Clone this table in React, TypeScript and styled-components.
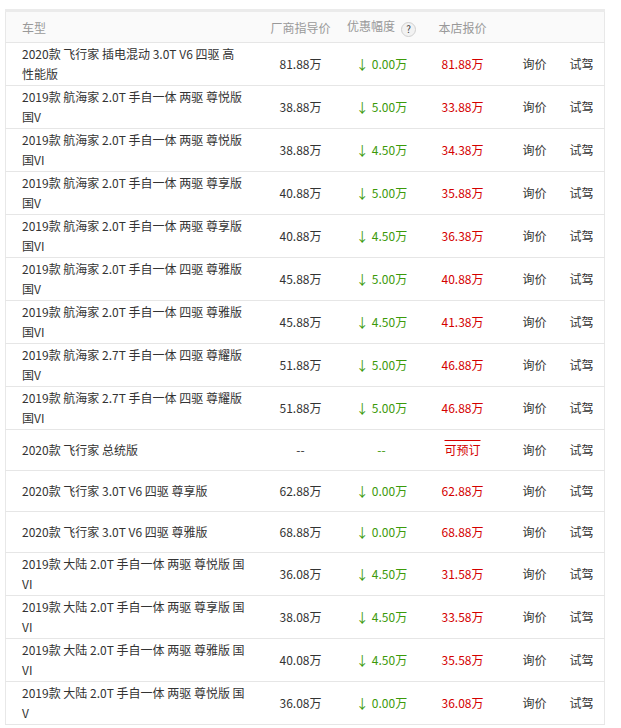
import React from "react";
import styled, { createGlobalStyle } from "styled-components";

type CarRow = {
  name: string[];
  guide: string;
  discount: string | null;
  price: string;
};

const rows: CarRow[] = [
  { name: ["2020款 飞行家 插电混动 3.0T V6 四驱 高", "性能版"], guide: "81.88万", discount: "0.00万", price: "81.88万" },
  { name: ["2019款 航海家 2.0T 手自一体 两驱 尊悦版", "国V"], guide: "38.88万", discount: "5.00万", price: "33.88万" },
  { name: ["2019款 航海家 2.0T 手自一体 两驱 尊悦版", "国VI"], guide: "38.88万", discount: "4.50万", price: "34.38万" },
  { name: ["2019款 航海家 2.0T 手自一体 两驱 尊享版", "国V"], guide: "40.88万", discount: "5.00万", price: "35.88万" },
  { name: ["2019款 航海家 2.0T 手自一体 两驱 尊享版", "国VI"], guide: "40.88万", discount: "4.50万", price: "36.38万" },
  { name: ["2019款 航海家 2.0T 手自一体 四驱 尊雅版", "国V"], guide: "45.88万", discount: "5.00万", price: "40.88万" },
  { name: ["2019款 航海家 2.0T 手自一体 四驱 尊雅版", "国VI"], guide: "45.88万", discount: "4.50万", price: "41.38万" },
  { name: ["2019款 航海家 2.7T 手自一体 四驱 尊耀版", "国V"], guide: "51.88万", discount: "5.00万", price: "46.88万" },
  { name: ["2019款 航海家 2.7T 手自一体 四驱 尊耀版", "国VI"], guide: "51.88万", discount: "5.00万", price: "46.88万" },
  { name: ["2020款 飞行家 总统版"], guide: "--", discount: null, price: "可预订" },
  { name: ["2020款 飞行家 3.0T V6 四驱 尊享版"], guide: "62.88万", discount: "0.00万", price: "62.88万" },
  { name: ["2020款 飞行家 3.0T V6 四驱 尊雅版"], guide: "68.88万", discount: "0.00万", price: "68.88万" },
  { name: ["2019款 大陆 2.0T 手自一体 两驱 尊悦版 国", "VI"], guide: "36.08万", discount: "4.50万", price: "31.58万" },
  { name: ["2019款 大陆 2.0T 手自一体 两驱 尊享版 国", "VI"], guide: "38.08万", discount: "4.50万", price: "33.58万" },
  { name: ["2019款 大陆 2.0T 手自一体 两驱 尊雅版 国", "VI"], guide: "40.08万", discount: "4.50万", price: "35.58万" },
  { name: ["2019款 大陆 2.0T 手自一体 两驱 尊悦版 国", "V"], guide: "36.08万", discount: "0.00万", price: "36.08万" },
];

const App = () => {
  return (
    <>
      <GlobalStyle />
      <Page>
        <PriceTable>
          <colgroup>
            <col style={{ width: 257 }} />
            <col style={{ width: 76 }} />
            <col style={{ width: 86 }} />
            <col style={{ width: 76 }} />
            <col style={{ width: 62 }} />
            <col />
          </colgroup>
          <thead>
            <tr>
              <HeadCell $align="left">车型</HeadCell>
              <HeadCell>厂商指导价</HeadCell>
              <HeadCell>
                优惠幅度<HelpIcon>?</HelpIcon>
              </HeadCell>
              <HeadCell>本店报价</HeadCell>
              <HeadCell />
              <HeadCell />
            </tr>
          </thead>
          <tbody>
            {rows.map((row, i) => (
              <Row key={i}>
                <NameCell>
                  {row.name.map((line, j) => (
                    <NameLine key={j}>{line}</NameLine>
                  ))}
                </NameCell>
                <Cell>{row.guide}</Cell>
                <Cell>
                  {row.discount ? (
                    <Discount>
                      <Arrow>↓</Arrow>
                      {row.discount}
                    </Discount>
                  ) : (
                    <Discount>--</Discount>
                  )}
                </Cell>
                <Cell>
                  <Price $booking={row.price === "可预订"}>{row.price}</Price>
                </Cell>
                <ActionCell $pad={22}>询价</ActionCell>
                <ActionCell $pad={7}>试驾</ActionCell>
              </Row>
            ))}
          </tbody>
        </PriceTable>
      </Page>
    </>
  );
};

export default App;

const GlobalStyle = createGlobalStyle`
  body {
    margin: 0;
    background: #fff;
    font-family: "Noto Sans CJK SC", "Liberation Sans", sans-serif;
    font-size: 12px;
    color: #333;
  }
`;

const Page = styled.div`
  padding: 9px 0 0 5px;
`;

const PriceTable = styled.table`
  width: 600px;
  table-layout: fixed;
  border-collapse: collapse;
  border: 1px solid #e8e8e8;
  border-top: 3px solid #ebebeb;
`;

const HeadCell = styled.th<{ $align?: string }>`
  height: 30px;
  padding: 0 0 0 ${(p) => (p.$align === "left" ? "16px" : "0")};
  background: #fafafa;
  border-bottom: 1px solid #e6e6e6;
  color: #999;
  font-weight: normal;
  text-align: ${(p) => p.$align || "center"};
  white-space: nowrap;
  vertical-align: middle;
`;

const HelpIcon = styled.span`
  display: inline-flex;
  align-items: center;
  justify-content: center;
  width: 13px;
  height: 13px;
  margin-left: 6px;
  border: 1px solid #d0d0d0;
  border-radius: 50%;
  background: #f2f2f2;
  color: #444;
  font-size: 10px;
  line-height: 1;
  vertical-align: -2px;
`;

const Row = styled.tr`
  border-bottom: 1px solid #e6e6e6;
`;

const Cell = styled.td`
  height: 38px;
  padding: 1px 0;
  line-height: 20px;
  text-align: center;
  vertical-align: middle;
  white-space: nowrap;
`;

const NameCell = styled(Cell)`
  padding-left: 16px;
  text-align: left;
`;

const NameLine = styled.div`
  white-space: nowrap;
`;

const ActionCell = styled(Cell)<{ $pad: number }>`
  padding-left: ${(p) => p.$pad}px;
  text-align: left;
`;

const Discount = styled.span`
  color: #3c9a0a;
`;

const Arrow = styled.span`
  margin-right: 3px;
  font-family: "Noto Sans CJK SC", sans-serif;
  font-size: 13px;
`;

const Price = styled.span<{ $booking?: boolean }>`
  color: #d40000;
  text-decoration: ${(p) => (p.$booking ? "overline" : "none")};
`;
